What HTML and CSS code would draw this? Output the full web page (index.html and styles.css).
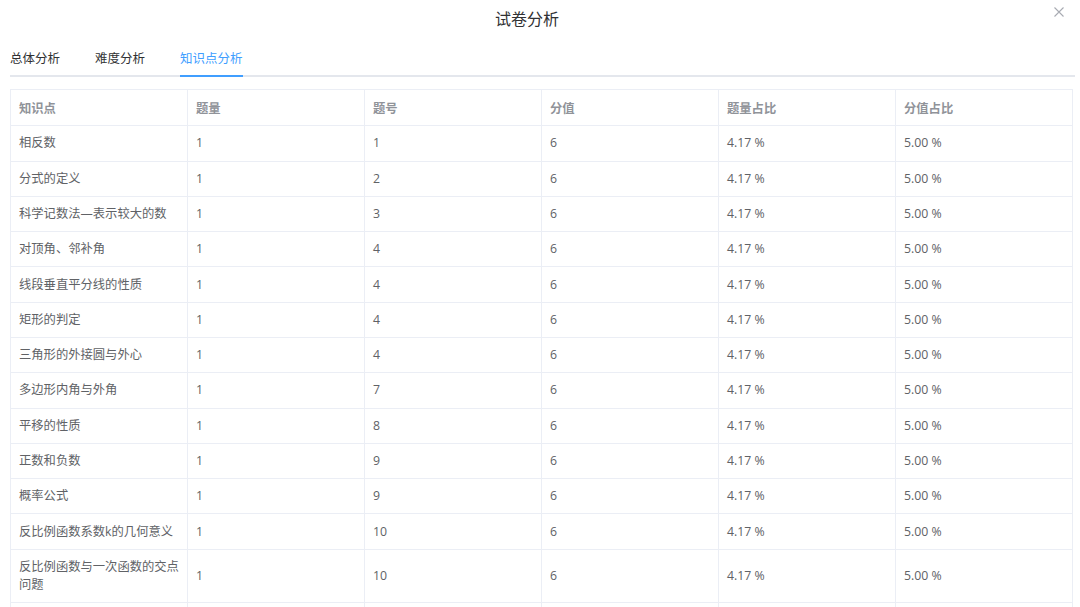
FILE: index.html
```html
<!DOCTYPE html>
<html lang="zh-CN">
<head>
<meta charset="utf-8">
<title>试卷分析</title>
<link rel="stylesheet" href="styles.css">
</head>
<body>
<div class="dialog">
  <div class="dialog-header">
    <div class="dialog-title">试卷分析</div>
    <div class="dialog-close">
      <svg width="10" height="10" viewBox="0 0 10 10"><path d="M0.5 0.5 L9.5 9.5 M9.5 0.5 L0.5 9.5" stroke="#a8abb2" stroke-width="1.1" fill="none"/></svg>
    </div>
  </div>
  <div class="tabs">
    <div class="tab">总体分析</div>
    <div class="tab">难度分析</div>
    <div class="tab active">知识点分析</div>
  </div>
  <table class="table">
    <thead>
      <tr><th>知识点</th><th>题量</th><th>题号</th><th>分值</th><th>题量占比</th><th>分值占比</th></tr>
    </thead>
    <tbody>
      <tr><td>相反数</td><td>1</td><td>1</td><td>6</td><td>4.17 %</td><td>5.00 %</td></tr>
      <tr><td>分式的定义</td><td>1</td><td>2</td><td>6</td><td>4.17 %</td><td>5.00 %</td></tr>
      <tr><td>科学记数法—表示较大的数</td><td>1</td><td>3</td><td>6</td><td>4.17 %</td><td>5.00 %</td></tr>
      <tr><td>对顶角、邻补角</td><td>1</td><td>4</td><td>6</td><td>4.17 %</td><td>5.00 %</td></tr>
      <tr><td>线段垂直平分线的性质</td><td>1</td><td>4</td><td>6</td><td>4.17 %</td><td>5.00 %</td></tr>
      <tr><td>矩形的判定</td><td>1</td><td>4</td><td>6</td><td>4.17 %</td><td>5.00 %</td></tr>
      <tr><td>三角形的外接圆与外心</td><td>1</td><td>4</td><td>6</td><td>4.17 %</td><td>5.00 %</td></tr>
      <tr><td>多边形内角与外角</td><td>1</td><td>7</td><td>6</td><td>4.17 %</td><td>5.00 %</td></tr>
      <tr><td>平移的性质</td><td>1</td><td>8</td><td>6</td><td>4.17 %</td><td>5.00 %</td></tr>
      <tr><td>正数和负数</td><td>1</td><td>9</td><td>6</td><td>4.17 %</td><td>5.00 %</td></tr>
      <tr><td>概率公式</td><td>1</td><td>9</td><td>6</td><td>4.17 %</td><td>5.00 %</td></tr>
      <tr><td>反比例函数系数k的几何意义</td><td>1</td><td>10</td><td>6</td><td>4.17 %</td><td>5.00 %</td></tr>
      <tr><td>反比例函数与一次函数的交点问题</td><td>1</td><td>10</td><td>6</td><td>4.17 %</td><td>5.00 %</td></tr>
      <tr class="filler"><td></td><td></td><td></td><td></td><td></td><td></td></tr>
    </tbody>
  </table>
</div>
</body>
</html>
```
FILE: styles.css
```css
html, body {
  margin: 0;
  padding: 0;
  background: #ffffff;
  overflow: hidden;
}
body {
  font-family: "Open Sans", "Noto Sans CJK SC", sans-serif;
  color: #606266;
  width: 1080px;
  height: 607px;
}
.dialog {
  padding: 0 7px 0 10px;
}
.dialog-header {
  display: flex;
  height: 40px;
  margin-right: -7px;
}
.dialog-title {
  flex: 1;
  text-align: center;
  font-size: 16px;
  line-height: 36px;
  color: #303133;
  font-family: "Noto Sans CJK SC", sans-serif;
}
.dialog-close {
  width: 18px;
  padding: 7px 8px 0 10px;
  box-sizing: content-box;
  line-height: 0;
}
.tabs {
  display: flex;
  gap: 35px;
  height: 35px;
  border-bottom: 2px solid #e4e7ed;
  margin-right: -2px;
}
.tab {
  font-family: "Noto Sans CJK SC", sans-serif;
  font-size: 12.5px;
  line-height: 36px;
  color: #303133;
  position: relative;
}
.tab.active {
  color: #409eff;
}
.tab.active::after {
  content: "";
  position: absolute;
  left: 0;
  right: 0;
  bottom: -2px;
  height: 2px;
  background: #409eff;
}
.table {
  margin-top: 12px;
  width: 1063px;
  border-collapse: collapse;
  table-layout: fixed;
  border: 1px solid #ebeef5;
  font-size: 12.3px;
}
.table th, .table td {
  border: 1px solid #ebeef5;
  text-align: left;
  padding: 8.15px 5px 8.15px 8px;
  line-height: 18px;
  vertical-align: middle;
  font-family: "Open Sans", "Noto Sans CJK SC", sans-serif;
}
.table th {
  color: #909399;
  font-weight: 600;
  height: 19px;
  font-family: "Noto Sans CJK SC", sans-serif;
}
.table td {
  color: #606266;
}
.table .filler td {
  height: 18px;
}
```
